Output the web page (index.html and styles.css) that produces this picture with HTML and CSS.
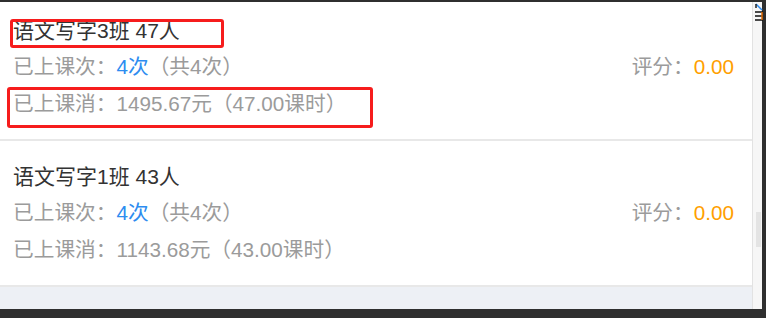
FILE: index.html
```html
<!DOCTYPE html>
<html lang="zh-CN">
<head>
    <meta charset="UTF-8">
    <meta name="viewport" content="width=device-width, initial-scale=1.0">
    <title>班级列表</title>
    <link rel="stylesheet" href="styles.css">
</head>
<body>
    <div class="frame">
        <div class="panel">
            <div class="list">
                <div class="card">
                    <div class="title">语文写字3班 47人</div>
                    <div class="row">
                        <span>已上课次：<em class="blue">4次</em>（共4次）</span>
                        <span>评分：<em class="orange">0.00</em></span>
                    </div>
                    <div class="row">
                        <span>已上课消：1495.67元（47.00课时）</span>
                    </div>
                    <!-- annotation boxes drawn on the screenshot -->
                    <div class="mark mark-title"></div>
                    <div class="mark mark-cost"></div>
                </div>
                <div class="card">
                    <div class="title">语文写字1班 43人</div>
                    <div class="row">
                        <span>已上课次：<em class="blue">4次</em>（共4次）</span>
                        <span>评分：<em class="orange">0.00</em></span>
                    </div>
                    <div class="row">
                        <span>已上课消：1143.68元（43.00课时）</span>
                    </div>
                </div>
            </div>
        </div>
        <div class="scrollbar">
            <svg class="corner" width="8" height="20" viewBox="0 0 8 20">
                <path d="M1 1 L7 7" stroke="#2d8cf0" stroke-width="1.5" fill="none"/>
                <path d="M1 1 L1 5" stroke="#222" stroke-width="1.5"/>
                <path d="M0 9 H8 M0 13 H8 M0 17 H8" stroke="#111" stroke-width="1.5"/>
                <path d="M7 9 V17" stroke="#e06a00" stroke-width="1.5"/>
            </svg>
            <div class="thumb"></div>
        </div>
    </div>
</body>
</html>
```

FILE: styles.css
```css
body {
    margin: 0;
    padding: 2px 0 0;
    background-color: #2f2f2f;
    font-family: "Liberation Sans", "Noto Sans CJK SC", sans-serif;
    overflow: hidden;
}
.frame {
    display: flex;
    width: 762px;
    height: 307px;
}
.panel {
    width: 752px;
    background-color: #edf0f5;
    overflow: hidden;
}
.list {
    margin-top: -7px;
}
.card {
    position: relative;
    background-color: #fff;
    padding: 18px 18px 18px 13px;
    border-bottom: 2px solid #e8e8e8;
    font-size: 20.7px;
    color: #9b9b9b;
}
.title,
.row {
    height: 36px;
    line-height: 36px;
    white-space: nowrap;
}
.row + .row {
    line-height: 37px;
}
.title {
    color: #333;
    font-size: 21px;
}
.row {
    display: flex;
    justify-content: space-between;
}
.row em {
    font-style: normal;
}
.blue {
    color: #2d8cf0;
}
.orange {
    color: #ff9f00;
}
.mark {
    position: absolute;
    border: 3px solid #f61c1c;
    border-radius: 3px;
    box-sizing: border-box;
}
.mark-title {
    left: 10px;
    top: 24px;
    width: 214px;
    height: 29px;
}
.mark-cost {
    left: 7px;
    top: 92px;
    width: 366px;
    height: 41px;
}
.scrollbar {
    position: relative;
    width: 9px;
    background-color: #f6f6f6;
    border-left: 1px solid #e2e2e2;
}
.corner {
    position: absolute;
    top: 1px;
    left: 2px;
}
.thumb {
    position: absolute;
    top: 210px;
    left: 3px;
    width: 5px;
    height: 35px;
    background-color: #e4e4e4;
}
```
